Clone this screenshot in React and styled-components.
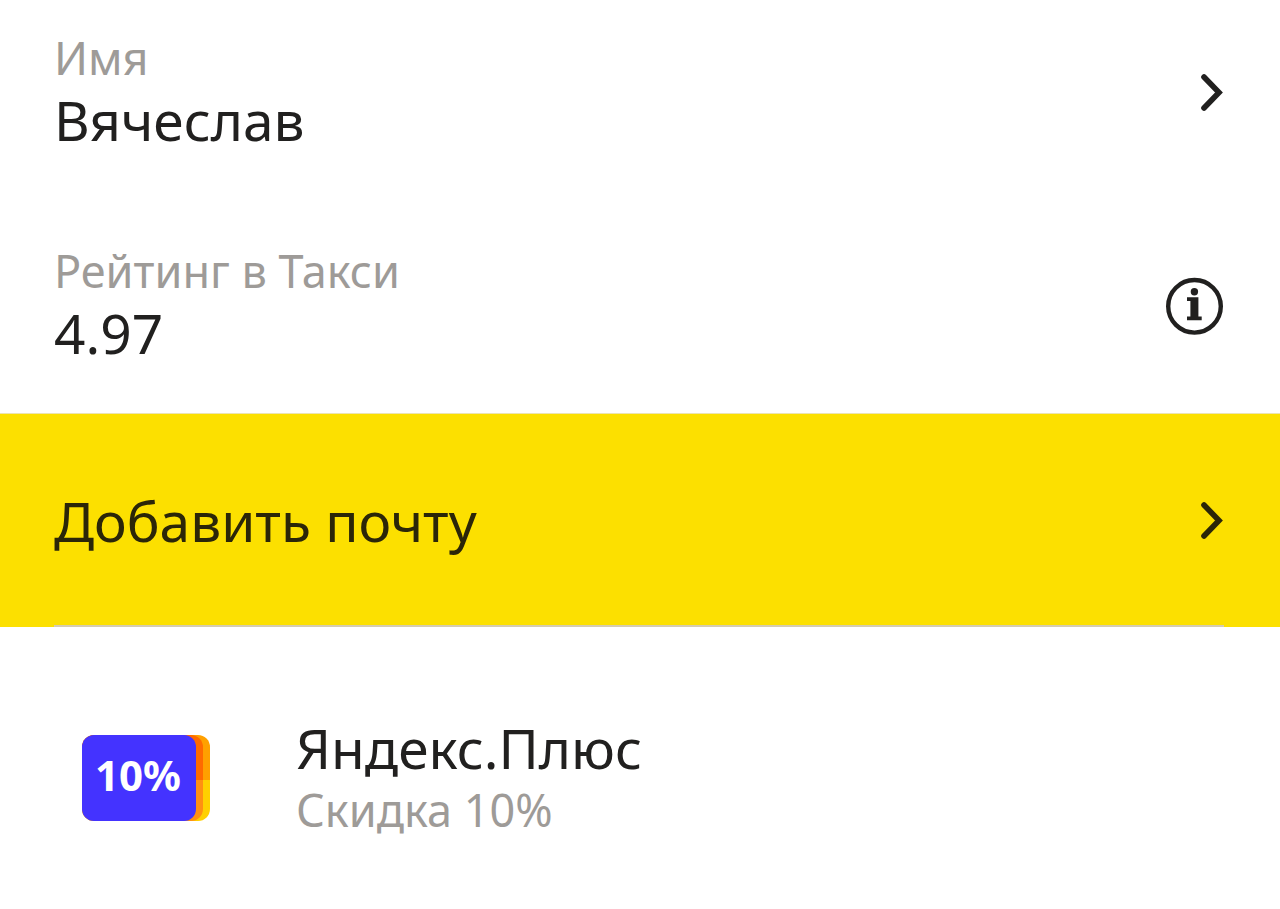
import React from 'react';
import styled, { createGlobalStyle } from 'styled-components';

const GlobalStyle = createGlobalStyle`
  * {
    box-sizing: border-box;
  }
  body {
    margin: 0;
    background: #fff;
    color: #21201f;
    font-family: 'Noto Sans', 'Open Sans', sans-serif;
  }
`;

const Row = styled.button`
  display: flex;
  align-items: center;
  justify-content: space-between;
  width: 100%;
  min-height: 214px;
  padding: 0 56px 0 54px;
  border: 0;
  background: none;
  color: inherit;
  font: inherit;
  text-align: left;
  cursor: pointer;
`;

const NameRow = styled(Row)`
  min-height: 199px;
  padding-bottom: 14px;
`;

const MailRow = styled(Row)`
  background: #fce000;
  border-top: 1px solid #ece4b0;
  color: #2b2608;
`;

const Divider = styled.hr`
  height: 2px;
  margin: -2px 56px 0 54px;
  border: 0;
  background: #d5ccb0;
`;

const Texts = styled.span`
  display: flex;
  flex-direction: column;
  padding-bottom: ${props => (props.$raised ? '6px' : '0')};
`;

const Label = styled.span`
  color: #9e9b98;
  font-size: 45px;
  line-height: 60px;
`;

const Value = styled.span`
  font-size: 55px;
  line-height: 64px;
`;

const PlusRow = styled(Row)`
  justify-content: flex-start;
  gap: 86px;
  min-height: 282px;
  padding: 19px 56px 0 82px;
`;

const Badge = styled.span`
  display: flex;
  width: 128px;
  height: 86px;
  border-radius: 12px;
  background: linear-gradient(#ffa000 52%, #ffd000 52%);
`;

const BadgeMiddle = styled.span`
  display: flex;
  width: 121px;
  border-radius: 12px;
  background: linear-gradient(#ff6a00 52%, #ff9012 52%);
`;

const BadgeFront = styled.span`
  display: flex;
  align-items: center;
  justify-content: center;
  width: 114px;
  padding: 0 2px 6px 0;
  border-radius: 12px;
  background: #4433ff;
  color: #fff;
  font-size: 42px;
  font-weight: 700;
`;

const Chevron = () => (
  <svg width="24" height="40" viewBox="0 0 24 40" fill="none" stroke="currentColor" strokeWidth="5.6" aria-hidden="true">
    <path d="M4 4l15 15.500L4 35" strokeLinecap="round" />
  </svg>
);

const Info = () => (
  <svg width="58" height="58" viewBox="0 0 58 58" fill="currentColor" aria-hidden="true">
    <circle cx="28.500" cy="29.300" r="26.300" fill="none" stroke="currentColor" strokeWidth="4.400" />
    <circle cx="28.400" cy="14.700" r="3.700" />
    <path d="M21 20.300h11.400v19.200h3.300v3.700H21v-3.700h3.400V24H21z" />
  </svg>
);

export default function App() {
  return (
    <main>
      <GlobalStyle />
      <NameRow>
        <Texts $raised>
          <Label>Имя</Label>
          <Value>Вячеслав</Value>
        </Texts>
        <Chevron />
      </NameRow>
      <Row>
        <Texts $raised>
          <Label>Рейтинг в Такси</Label>
          <Value>4.97</Value>
        </Texts>
        <Info />
      </Row>
      <MailRow>
        <Value>Добавить почту</Value>
        <Chevron />
      </MailRow>
      <Divider />
      <PlusRow>
        <Badge>
          <BadgeMiddle>
            <BadgeFront>10%</BadgeFront>
          </BadgeMiddle>
        </Badge>
        <Texts>
          <Value>Яндекс.Плюс</Value>
          <Label>Скидка 10%</Label>
        </Texts>
      </PlusRow>
    </main>
  );
}
